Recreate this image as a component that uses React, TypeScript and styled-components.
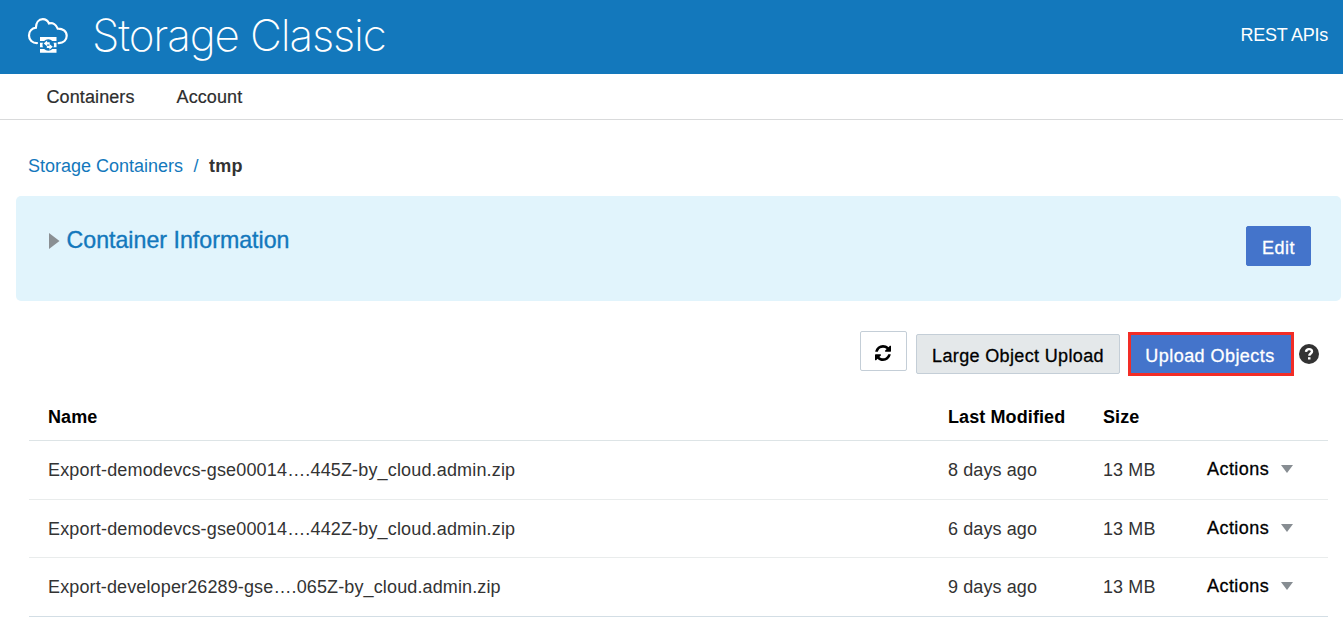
import React from "react";
import styled, { createGlobalStyle } from "styled-components";

const GlobalStyle = createGlobalStyle`
  * { box-sizing: border-box; }
  body {
    margin: 0;
    background: #fff;
    color: #333;
    font-family: "Liberation Sans", Arial, sans-serif;
    font-size: 18px;
    line-height: 22px;
  }
  button { font: inherit; cursor: pointer; }
  a { text-decoration: none; }
`;

const Page = styled.div`
  width: 100%;
  height: 635px;
  overflow: hidden;
`;

const Header = styled.header`
  display: flex;
  align-items: center;
  height: 74px;
  padding: 0 15px 0 27px;
  background: #1378bc;
  color: #fff;
`;

const Title = styled.h1`
  flex: 1;
  margin: 0 0 4px 23px;
  font-family: Inter, "Liberation Sans", sans-serif;
  font-size: 44px;
  font-weight: 200;
  line-height: 56px;
  letter-spacing: -1.15px;
`;

const HeaderLink = styled.a`
  margin-bottom: 4px;
  color: #fff;
  letter-spacing: -0.25px;
`;

const Nav = styled.nav`
  display: flex;
  align-items: center;
  gap: 42px;
  height: 46px;
  padding: 0 46.5px;
  border-bottom: 1px solid #d9dadb;
`;

const NavLink = styled.a`
  color: #2d2d2d;
  letter-spacing: 0.1px;
  -webkit-text-stroke: 0.2px #2d2d2d;
`;

const Breadcrumb = styled.div`
  display: flex;
  gap: 10.5px;
  height: 76px;
  padding: 35px 28px 0;
  color: #1378bc;
`;

const Current = styled.strong`
  color: #333;
  letter-spacing: 0.2px;
`;

const InfoPanel = styled.section`
  display: flex;
  justify-content: space-between;
  align-items: flex-start;
  height: 105px;
  margin: 0 2px 0 16px;
  padding: 30px 30px 0 33px;
  border-radius: 5px;
  background: #e1f4fc;
`;

const Disclosure = styled.h2`
  display: flex;
  align-items: center;
  gap: 6.5px;
  margin: 0;
  color: #1378bc;
  font-size: 23.2px;
  font-weight: 400;
  line-height: 29px;
  -webkit-text-stroke: 0.35px #1378bc;
`;

const Button = styled.button<{ $kind: "primary" | "plain" | "white"; $width: number }>`
  display: flex;
  align-items: center;
  justify-content: center;
  width: ${(p) => p.$width}px;
  height: 40px;
  padding: 3px 0 0;
  border: 1px solid ${(p) => (p.$kind === "primary" ? "#4474cb" : "#c4ced7")};
  border-radius: 2px;
  background: ${(p) => ({ primary: "#4474cb", plain: "#e4e8ea", white: "#fff" })[p.$kind]};
  color: ${(p) => (p.$kind === "primary" ? "#fff" : "#000")};
  white-space: nowrap;
  letter-spacing: ${(p) => (p.$kind === "primary" ? 0.45 : 0.35)}px;
  -webkit-text-stroke: 0.3px currentColor;
`;

const RefreshButton = styled(Button)`
  margin-right: 9px;
  padding: 3px 1px 0 0;
`;

const Highlight = styled.div`
  margin: 1px 5px 0 8px;
  border: 3px solid #f22d26;
  height: 44px;

  ${Button} {
    height: 38px;
    padding-right: 2px;
    border-radius: 0;
  }
`;

const Toolbar = styled.div`
  display: flex;
  justify-content: flex-end;
  align-items: flex-start;
  height: 92px;
  padding: 30px 24px 0 0;
`;

const Lowered = styled.div`
  margin-top: 3px;
`;

const HelpWrap = styled.div`
  display: flex;
  margin-top: 13px;
`;

const Table = styled.div`
  margin: 0 15px 0 29px;
`;

const Row = styled.div<{ $height: number; $line: string }>`
  display: grid;
  grid-template-columns: 900px 155px 104px 1fr;
  align-items: center;
  height: ${(p) => p.$height}px;
  padding-left: 19px;
  border-bottom: 1px solid ${(p) => p.$line};
`;

const HeadRow = styled(Row)`
  color: #000;
  font-weight: 700;
`;

const Cell = styled.span<{ $spacing?: number }>`
  letter-spacing: ${(p) => p.$spacing ?? 0.1}px;
  white-space: nowrap;
`;

const Actions = styled.div`
  display: flex;
  align-items: center;
  gap: 11.5px;
  margin-bottom: 2px;
  color: #000;
  letter-spacing: 0.45px;
  -webkit-text-stroke: 0.3px #000;
`;

const CloudIcon = () => (
  <svg width="42" height="38" viewBox="0 0 42 38" fill="none">
    <path
      d="M10 24.300C5.400 24.300 2 21.100 2 16.700c0-4.200 2.900-7.200 6.900-7.800C9 4.100 11.600.4 15.800.4c3 0 5 1.600 6.200 4.300C25.800 3.600 29.200 6 30.700 9.800c5-.2 9 2.600 9 7.200 0 4.200-3.200 7-8 7.300"
      transform="translate(0 .8)"
      stroke="#fff"
      strokeWidth="2.200"
      strokeLinecap="round"
    />
    <path d="M13 19h16.500v4H13zM13 31h16.500v3.800H13zM13 24.800h16.500v4.400H13z" fill="#fff" />
    <circle cx="21.250" cy="27" r="5.800" fill="#1378bc" />
    <path
      d="M16.700 25.400l3.400-3v1.800h2.600v2.200h-2.600v1.800zM25.800 28.700l-3.400 3v-1.800h-2.600v-2.200h2.600v-1.800z"
      fill="#fff"
    />
  </svg>
);

const RefreshIcon = () => (
  <svg width="16" height="16" viewBox="0 0 1536 1536" fill="#000">
    <path d="M1511 928q0 5-1 7-64 268-268 434.500T764 1536q-146 0-282.500-55T238 1324l-129 129q-19 19-45 19t-45-19-19-45V960q0-26 19-45t45-19h448q26 0 45 19t19 45-19 45l-137 137q71 66 161 102t187 36q134 0 250-65t186-179q11-17 53-117 8-23 30-23h192q13 0 22.500 9.500t9.500 22.500zm25-800v448q0 26-19 45t-45 19h-448q-26 0-45-19t-19-45 19-45l138-138Q969 256 768 256q-134 0-250 65T332 500q-11 17-53 117-8 23-30 23H50q-13 0-22.500-9.500T18 608v-7q65-268 270-434.500T768 0q146 0 284 55.500T1297 212l130-129q19-19 45-19t45 19 19 45z" />
  </svg>
);

const HelpIcon = () => (
  <svg width="20" height="20" viewBox="0 0 20 20" fill="none">
    <circle cx="10" cy="10" r="10" fill="#333" />
    <path d="M7 7.800C7.200 5.900 8.400 5.100 10 5.100c1.800 0 3 .9 3 2.400 0 2-2.700 2-2.700 4.300" stroke="#fff" strokeWidth="2.400" />
    <path d="M9 13.200h2.500v2.300H9z" fill="#fff" />
  </svg>
);

const RightTriangle = () => (
  <svg width="11" height="16" viewBox="0 0 11 16">
    <path d="M0 0L10.500 8L0 16z" fill="#8a8f93" />
  </svg>
);

const DownTriangle = () => (
  <svg width="12" height="8" viewBox="0 0 12 8">
    <path d="M0 0H12L6 8z" fill="#878d92" />
  </svg>
);

const objects = [
  { name: "Export-demodevcs-gse00014….445Z-by_cloud.admin.zip", modified: "8 days ago", size: "13 MB", height: 59, line: "#e9ecec", spacing: 0.16 },
  { name: "Export-demodevcs-gse00014….442Z-by_cloud.admin.zip", modified: "6 days ago", size: "13 MB", height: 58, line: "#e9ecec", spacing: 0.16 },
  { name: "Export-developer26289-gse….065Z-by_cloud.admin.zip", modified: "9 days ago", size: "13 MB", height: 59, line: "#d3dee5", spacing: 0.13 },
];

export default function App() {
  return (
    <Page>
      <GlobalStyle />
      <Header>
        <CloudIcon />
        <Title>Storage Classic</Title>
        <HeaderLink>REST APIs</HeaderLink>
      </Header>
      <Nav>
        <NavLink>Containers</NavLink>
        <NavLink>Account</NavLink>
      </Nav>
      <Breadcrumb>
        <a>Storage Containers</a>
        <span>/</span>
        <Current>tmp</Current>
      </Breadcrumb>
      <InfoPanel>
        <Disclosure>
          <RightTriangle />
          Container Information
        </Disclosure>
        <Button $kind="primary" $width={65}>Edit</Button>
      </InfoPanel>
      <Toolbar>
        <RefreshButton $kind="white" $width={47} aria-label="Refresh">
          <RefreshIcon />
        </RefreshButton>
        <Lowered>
          <Button $kind="plain" $width={204}>Large Object Upload</Button>
        </Lowered>
        <Highlight>
          <Button $kind="primary" $width={160}>Upload Objects</Button>
        </Highlight>
        <HelpWrap>
          <HelpIcon />
        </HelpWrap>
      </Toolbar>
      <Table>
        <HeadRow $height={48} $line="#dde4e6">
          <Cell>Name</Cell>
          <Cell>Last Modified</Cell>
          <Cell>Size</Cell>
        </HeadRow>
        {objects.map((o) => (
          <Row key={o.name} $height={o.height} $line={o.line}>
            <Cell $spacing={o.spacing}>{o.name}</Cell>
            <Cell>{o.modified}</Cell>
            <Cell>{o.size}</Cell>
            <Actions>
              Actions
              <DownTriangle />
            </Actions>
          </Row>
        ))}
      </Table>
    </Page>
  );
}
